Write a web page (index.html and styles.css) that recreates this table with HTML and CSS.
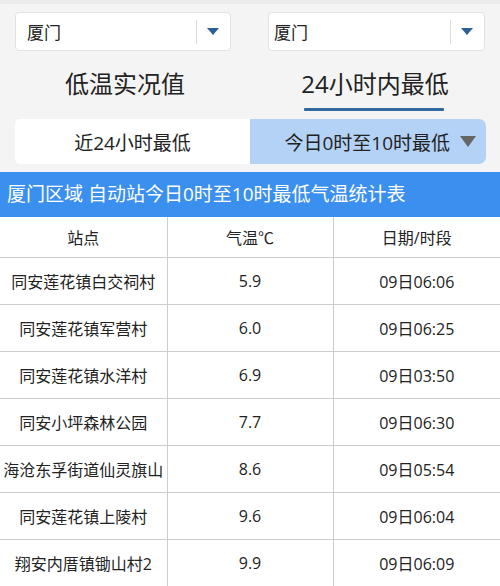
FILE: index.html
```html
<!DOCTYPE html>
<html lang="zh">
<head>
<meta charset="utf-8">
<link rel="stylesheet" href="styles.css">
</head>
<body>
<div class="topstrip"></div>
<div class="selects">
  <div class="select"><span class="sel-text">厦门</span><span class="sel-div"></span><span class="sel-arrow"></span></div>
  <div class="select"><span class="sel-text">厦门</span><span class="sel-div"></span><span class="sel-arrow"></span></div>
</div>
<div class="tabs">
  <div class="tab">低温实况值</div>
  <div class="tab active">24小时内最低</div>
</div>
<div class="subtabs">
  <div class="subtab">近24小时最低</div>
  <div class="subtab on">今日0时至10时最低<span class="tri"></span></div>
</div>
<div class="banner">厦门区域 自动站今日0时至10时最低气温统计表</div>
<table class="data">
  <thead>
    <tr><th>站点</th><th>气温℃</th><th>日期/时段</th></tr>
  </thead>
  <tbody>
    <tr><td>同安莲花镇白交祠村</td><td>5.9</td><td>09日06:06</td></tr>
    <tr><td>同安莲花镇军营村</td><td>6.0</td><td>09日06:25</td></tr>
    <tr><td>同安莲花镇水洋村</td><td>6.9</td><td>09日03:50</td></tr>
    <tr><td>同安小坪森林公园</td><td>7.7</td><td>09日06:30</td></tr>
    <tr><td>海沧东孚街道仙灵旗山</td><td>8.6</td><td>09日05:54</td></tr>
    <tr><td>同安莲花镇上陵村</td><td>9.6</td><td>09日06:04</td></tr>
    <tr><td>翔安内厝镇锄山村2</td><td>9.9</td><td>09日06:09</td></tr>
  </tbody>
</table>
</body>
</html>
```
FILE: styles.css
```css
* { box-sizing: border-box; }
html, body { margin: 0; padding: 0; }
body {
  width: 500px;
  height: 586px;
  overflow: hidden;
  background: #f4f4f4;
  font-family: "Open Sans", "Noto Sans CJK SC", sans-serif;
  color: #222;
}
.topstrip { height: 4px; background: #ececec; }
.selects {
  display: flex;
  justify-content: space-between;
  padding: 8px 15px 0 15px;
}
.select {
  width: 216px;
  height: 39px;
  background: #fff;
  border: 1px solid #e2e2e2;
  border-radius: 4px;
  display: flex;
  align-items: center;
  padding-left: 11px;
}
.select + .select { width: 217px; padding-left: 5px; }
.sel-text { font-size: 17px; flex: 1; color: #222; }
.sel-div { width: 1px; height: 24px; background: #ddd; margin-right: 10px; }
.sel-arrow {
  width: 0; height: 0;
  border-left: 6px solid transparent;
  border-right: 6px solid transparent;
  border-top: 7px solid #2f5f95;
  margin-right: 11px;
}
.tabs {
  display: flex;
  height: 61px;
}
.tab {
  flex: 1;
  text-align: center;
  font-size: 24px;
  line-height: 26px;
  padding-top: 20px;
  color: #222;
  position: relative;
}
.tab.active::after {
  content: "";
  position: absolute;
  left: 54px;
  right: 56px;
  bottom: 1px;
  height: 3px;
  background: #2f6a9e;
  border-radius: 1px;
}
.subtabs {
  display: flex;
  margin: 7px 14px 0 15px;
  height: 45px;
}
.subtab {
  width: 235px;
  background: #fff;
  border-radius: 5px 0 0 5px;
  font-size: 19px;
  display: flex;
  align-items: center;
  justify-content: center;
  color: #222;
}
.subtab.on {
  width: 236px;
  background: #b4d2f6;
  border-radius: 0 7px 7px 0;
  justify-content: flex-end;
  padding-right: 10px;
}
.tri {
  width: 0; height: 0;
  border-left: 8px solid transparent;
  border-right: 8px solid transparent;
  border-top: 11px solid #666;
  margin-left: 10px;
}
.banner {
  margin-top: 8px;
  height: 45px;
  background: #3b8fee;
  color: #fff;
  font-size: 19px;
  line-height: 45px;
  padding-left: 7px;
  white-space: nowrap;
}
.data {
  width: 500px;
  border-collapse: collapse;
  background: #fff;
  table-layout: fixed;
}
.data th, .data td {
  border: 1px solid #cdcdcd;
  text-align: center;
  font-weight: normal;
  font-size: 16px;
  color: #222;
  padding: 0;
  white-space: nowrap;
}
.data th { height: 40px; border-top: none; }
.data td { height: 47px; }
.data th:first-child, .data td:first-child { border-left: none; width: 167px; }
.data th:nth-child(2), .data td:nth-child(2) { width: 166px; }
.data th:last-child, .data td:last-child { border-right: none; }
```
